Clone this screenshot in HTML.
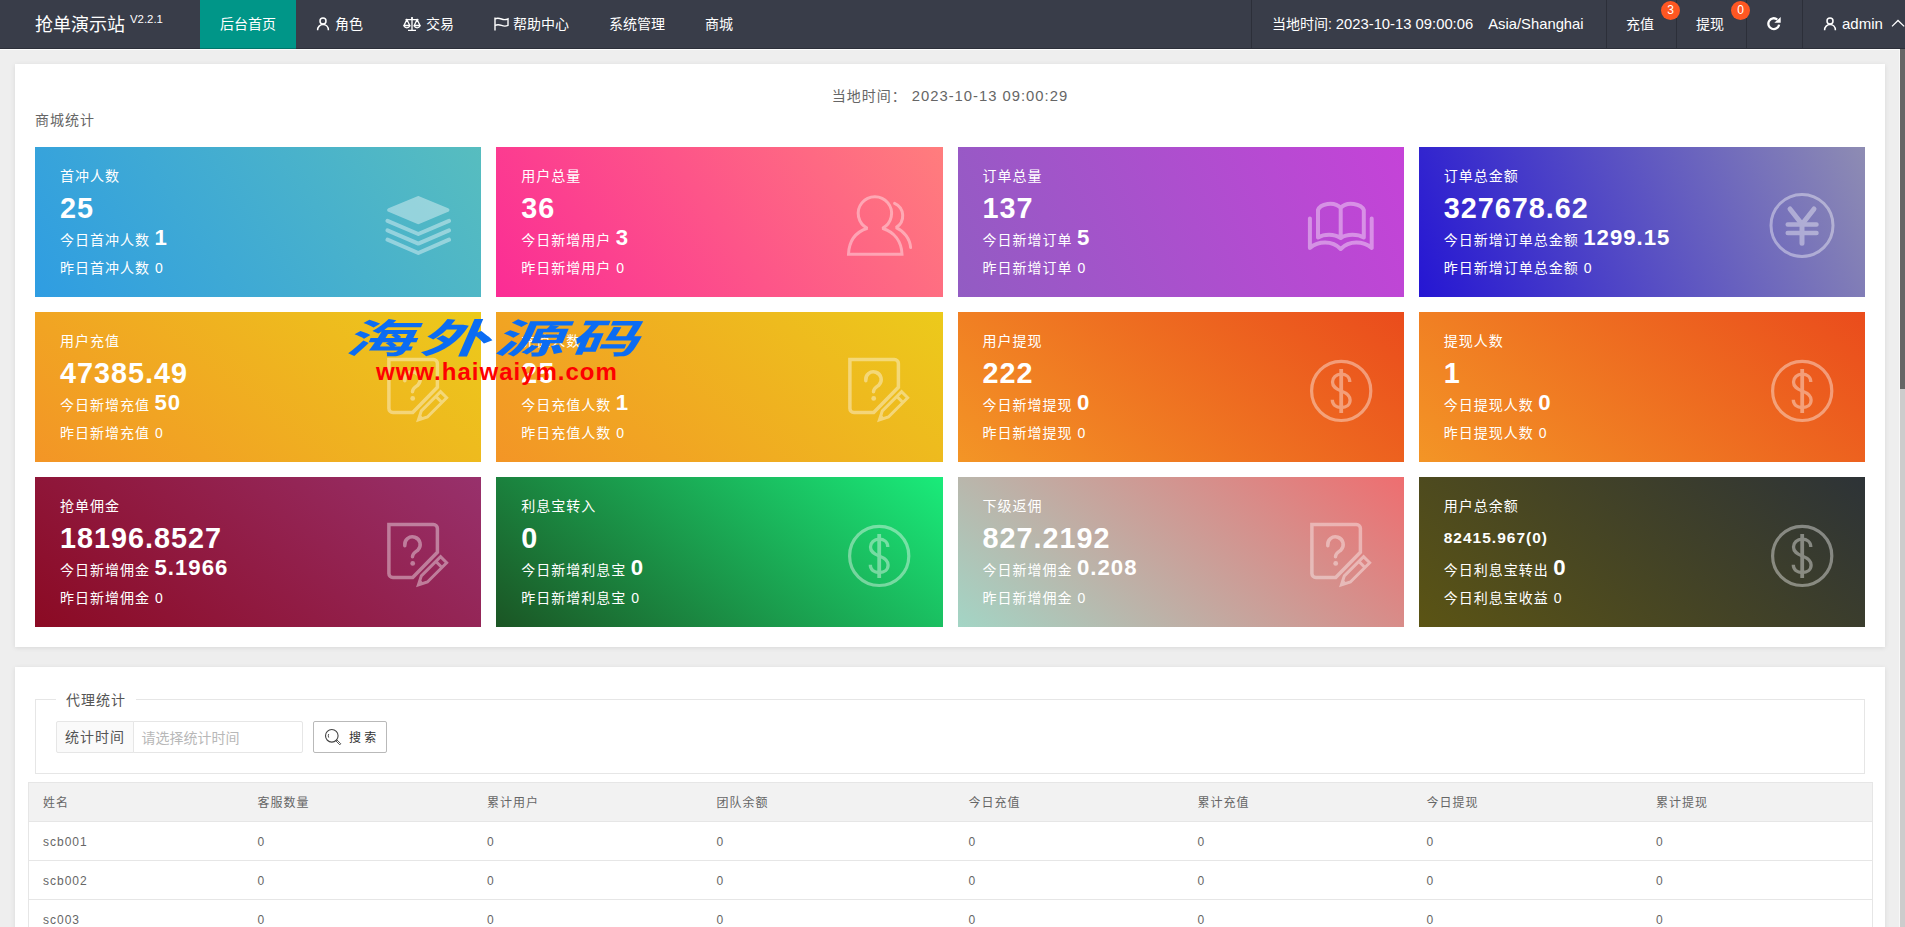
<!DOCTYPE html>
<html lang="zh-CN">
<head>
<meta charset="utf-8">
<title>抢单演示站</title>
<style>
*{box-sizing:border-box;margin:0;padding:0}
html,body{width:1905px;height:927px;overflow:hidden}
body{position:relative;background:#eee;font-family:"Liberation Sans","Noto Sans CJK SC",sans-serif;font-size:14px;color:#333;line-height:24px}
a{color:inherit;text-decoration:none}
/* ---------- header ---------- */
.hd{position:absolute;left:0;top:0;width:1905px;height:49px;background:#393d49;color:#fff;z-index:5}
.hd:after{content:'';position:absolute;left:0;top:48px;width:1905px;height:1px;background:rgba(0,0,0,.22)}
.wl{position:absolute;left:0;top:49px;width:1900px;height:1px;background:#fbfbfb}
.wr{position:absolute;left:1899px;top:49px;width:1px;height:878px;background:#f7f7f7}
.hd .logo{position:absolute;left:35px;top:0;height:48px;line-height:50px;font-size:18px;white-space:nowrap}
.hd .logo sup{font-size:11.4px;position:relative;top:-8px;left:5px;vertical-align:baseline;letter-spacing:0}
.nav{position:absolute;top:0;height:48px;line-height:49px;white-space:nowrap;font-size:14px}
.nav.l{left:200px}
.nav .it{position:absolute;top:0;height:49px;text-align:left}
.nav .it.on{background:#009688}
.nav .it svg{position:absolute}
.nav .it span{position:absolute;top:0}
.sep{position:absolute;top:0;width:1px;height:48px;background:rgba(0,0,0,.22)}
.bdg{position:absolute;top:1px;width:19px;height:19px;border-radius:10px;background:#ff5722;color:#fff;font-size:12px;line-height:19px;text-align:center}
/* ---------- scroll ---------- */
.sb{position:absolute;left:1900px;top:49px;width:5px;height:878px;background:#ccc}
.sb i{display:block;width:5px;height:340px;background:#666}
/* ---------- cards ---------- */
.card{position:absolute;left:15px;width:1870px;background:#fff;box-shadow:0 1px 5px 0 rgba(0,0,0,.09)}
.c1{top:64px;height:583px}
.c2{top:667px;height:300px}
.time{position:absolute;left:0;top:84px;width:1900px;text-align:center;color:#666;letter-spacing:1px;line-height:24px}
.ttl{position:absolute;left:35px;top:108px;color:#666;letter-spacing:1px;line-height:24px}
.st{position:absolute;width:446.25px;height:150px;color:#fff;padding:15px 25px;letter-spacing:1px;overflow:hidden}
.st div{white-space:nowrap}
.st .a{height:28px;line-height:28px}
.st .b{height:36px;line-height:36px;font-size:28.8px;font-weight:bold}
.st .b.sm{font-size:15.5px}
.st .c{height:28px;line-height:28px;position:relative;top:-2px}
.st .c b{font-size:22.2px;margin-left:4.5px}
.st .d{height:28px;line-height:28px}
.st .d span{margin-left:5px}
.st svg{position:absolute;left:346px;top:40px;width:76px;height:76px;overflow:visible}
.x1{left:35px}.x2{left:496.25px}.x3{left:957.5px}.x4{left:1418.75px}
.y1{top:147px}.y2{top:312px}.y3{top:477px}
.g1{background:linear-gradient(-125deg,#57bdbf,#2f9de2)}
.g2{background:linear-gradient(-125deg,#ff7d7d,#fb2c95)}
.g3{background:linear-gradient(-113deg,#c543d8,#925cc3)}
.g4{background:linear-gradient(-113deg,#8e8cb3,#2516d3)}
.g5{background:linear-gradient(-141deg,#ecca1b,#f39526)}
.g7{background:linear-gradient(-141deg,#ea4c1c,#f39526)}
.g9{background:linear-gradient(-141deg,#98316c,#8b0a23)}
.g10{background:linear-gradient(-141deg,#1aeb7a,#1b5524)}
.g11{background:linear-gradient(-141deg,#ee6e70,#a3d5c5)}
.g12{background:linear-gradient(-141deg,#2d3337,#5b5414)}
/* watermark */
.wm1{position:absolute;left:350px;top:311px;height:56px;line-height:56px;font-weight:700;font-size:40px;color:#0b6cf3;white-space:nowrap;letter-spacing:3px;z-index:4;transform-origin:0 50%;transform:scaleX(1.74) skewX(-14deg)}
.wm2{position:absolute;left:376px;top:357px;height:30px;line-height:30px;font-weight:bold;font-size:24px;letter-spacing:1px;color:#fe0000;white-space:nowrap;z-index:4}
/* ---------- fieldset ---------- */
.fs{position:absolute;left:35px;top:699px;width:1830px;height:75px;border:1px solid #e6e6e6}
.fs .lg{position:absolute;left:20px;top:-12px;height:24px;line-height:24px;padding:0 10px;background:#fff;color:#555;letter-spacing:1px;white-space:nowrap}
.lab{position:absolute;left:56px;top:721px;width:78px;height:32px;border:1px solid #e6e6e6;background:#fafafa;color:#555;line-height:30px;text-align:center;letter-spacing:1px;border-radius:2px 0 0 2px;white-space:nowrap}
.inp{position:absolute;left:133px;top:721px;width:170px;height:32px;border:1px solid #e6e6e6;background:#fff;color:#b8b8b8;line-height:32px;padding-left:7.5px;border-radius:0 2px 2px 0;white-space:nowrap}
.btn{position:absolute;left:313px;top:721px;width:74px;height:32px;border:1px solid #b9b9b9;background:#fff;color:#333;border-radius:2px;font-size:12px;line-height:33px;white-space:nowrap}
.btn span{position:absolute;left:35px;top:0;letter-spacing:0}
.btn svg{position:absolute;left:10px;top:6px}
/* ---------- table ---------- */
.tb{position:absolute;left:28px;top:782px;width:1845px;border-collapse:collapse;table-layout:fixed;font-size:12px;color:#666;letter-spacing:1px;background:#fff}
.tb th,.tb td{height:39px;padding:2px 0 0 14px;text-align:left;font-weight:normal;border-top:1px solid #e6e6e6;border-bottom:1px solid #e6e6e6;line-height:20px;white-space:nowrap}
.tb th{background:#f2f2f2}
.tb tr>*:first-child{border-left:1px solid #e6e6e6}
.tb tr>*:last-child{border-right:1px solid #e6e6e6}
</style>
</head>
<body>

<div class="hd">
  <div class="logo">抢单演示站<sup>V2.2.1</sup></div>
  <div class="nav l">
    <div class="it on" style="left:0;width:96px"><span style="left:20px">后台首页</span></div>
    <div class="it" style="left:96px;width:87px">
      <svg style="left:20px;top:17px" width="14" height="14" viewBox="0 0 14 14" fill="none" stroke="#fff" stroke-width="1.5"><circle cx="7" cy="4" r="3"/><path d="M1.6 13.2c0-3.4 2.4-5.6 5.4-5.6s5.4 2.2 5.4 5.6"/></svg>
      <span style="left:39px">角色</span></div>
    <div class="it" style="left:183px;width:90px">
      <svg style="left:20px;top:16px" width="18" height="16" viewBox="0 0 18 16" fill="none" stroke="#fff" stroke-width="1.3"><path d="M9 1.5v12.5M5 14.3h8M2.5 3.6h13M3.9 3.6L1 9.5h5.8L3.9 3.6zM14.1 3.6l-2.9 5.9H17l-2.9-5.9z"/><path d="M1 9.6c.5 1.6 1.6 2.2 2.9 2.2s2.4-.6 2.9-2.2M11.2 9.6c.5 1.6 1.6 2.2 2.9 2.2s2.4-.6 2.9-2.2" /><circle cx="9" cy="2" r="1" fill="#fff" stroke="none"/></svg>
      <span style="left:43px">交易</span></div>
    <div class="it" style="left:273px;width:115px">
      <svg style="left:21px;top:17px" width="16" height="14" viewBox="0 0 16 14" fill="none" stroke="#fff" stroke-width="1.4"><path d="M1 .5v13"/><path d="M1 1.8c2.5-1.2 4.5-.6 6.5.2s4 1 6.5-.2v6.6c-2.5 1.2-4.5.800-6.5 0s-4-1.2-6.5 0"/></svg>
      <span style="left:40px">帮助中心</span></div>
    <div class="it" style="left:388px;width:97px"><span style="left:21px">系统管理</span></div>
    <div class="it" style="left:485px;width:68px"><span style="left:20px">商城</span></div>
  </div>

  <i class="sep" style="left:1251px"></i>
  <i class="sep" style="left:1606px"></i>
  <i class="sep" style="left:1676px"></i>
  <i class="sep" style="left:1746px"></i>
  <i class="sep" style="left:1802px"></i>
  <div class="nav" style="left:1272px"><span id="t1">当地时间: <span style="font-size:14.8px">2023-10-13 09:00:06</span><span style="font-size:14.8px;margin-left:15px">Asia/Shanghai</span></span></div>
  <div class="nav" style="left:1626px">充值</div><b class="bdg" style="left:1661px;font-weight:normal">3</b>
  <div class="nav" style="left:1696px">提现</div><b class="bdg" style="left:1731px;font-weight:normal">0</b>
  <svg style="position:absolute;left:1766px;top:16px" width="16" height="16" viewBox="0 0 16 16" fill="none" stroke="#fff" stroke-width="2"><path d="M13.1 8.6A5.4 5.4 0 1 1 11.27 3.56" stroke-width="2.3"/><path d="M14.7 1.1V6.8H8.3z" fill="#fff" stroke="none"/></svg>
  <svg style="position:absolute;left:1823px;top:17px" width="14" height="14" viewBox="0 0 14 14" fill="none" stroke="#fff" stroke-width="1.5"><circle cx="7" cy="4" r="3"/><path d="M1.6 13.2c0-3.4 2.4-5.6 5.4-5.6s5.4 2.2 5.4 5.6"/></svg>
  <div class="nav" style="left:1842px;font-size:15px;line-height:47px">admin</div>
  <svg style="position:absolute;left:1891px;top:17px" width="14" height="10" viewBox="0 0 14 10" fill="none" stroke="#fff" stroke-width="1.3"><path d="M1 9.4L7 3.5L13.2 9.4"/></svg>
</div>

<div class="wl"></div><div class="wr"></div>
<div class="sb"><i></i></div>

<div class="card c1"></div>
<div class="time">当地时间：&nbsp;<span id="t2" style="font-size:14.8px">2023-10-13 09:00:29</span></div>
<div class="ttl">商城统计</div>

<!-- stat cards inserted here -->
<div class="st x1 y1 g1"><div class="a">首冲人数</div><div class="b ">25</div><div class="c">今日首冲人数<b>1</b></div><div class="d">昨日首冲人数<span>0</span></div><svg viewBox="0 0 76 76"><g opacity=".4" fill="#fff" stroke="#fff" stroke-width="4" stroke-linejoin="round" stroke-linecap="round"><path d="M8.2 23L37.3 11L66.4 23L37.3 35.2z"/><path fill="none" d="M6.5 33.8L37.3 47L68 33.8M6.5 43.3L37.3 56.6L68 43.3M6.5 52.7L37.3 66L68 52.7"/></g></svg></div>
<div class="st x2 y1 g2"><div class="a">用户总量</div><div class="b ">36</div><div class="c">今日新增用户<b>3</b></div><div class="d">昨日新增用户<span>0</span></div><svg viewBox="0 0 76 76" fill="none" stroke="#fff" stroke-opacity=".4" stroke-width="3" stroke-linecap="round" stroke-linejoin="miter" stroke-miterlimit="2.2"><path d="M25.4 41.3A16.7 16.7 0 1 1 40.4 41.3C52 45 59.5 54 60 67.3H6.5C7 54 14 45 25.4 41.3z"/><path d="M52.6 16.3A13.7 13.7 0 0 1 54 40.6C62 44 68 52 68.6 60.5"/></svg></div>
<div class="st x3 y1 g3"><div class="a">订单总量</div><div class="b ">137</div><div class="c">今日新增订单<b>5</b></div><div class="d">昨日新增订单<span>0</span></div><svg viewBox="0 0 76 76" fill="none" stroke="#fff" stroke-opacity=".4" stroke-width="4" stroke-linecap="round" stroke-linejoin="round"><path d="M5.9 31.5V61C14 54 28 53 36.7 62C45.4 53 59.5 54 67.7 61V31.5"/><path d="M14 50.5V23C16 17 30 13.5 36.7 21V51M36.7 21C43 13.5 57.5 17 59.8 23V50.5M14 50.5C20 47 30 46.5 36.7 51C43 46.5 54 47 59.8 50.5" /></svg></div>
<div class="st x4 y1 g4"><div class="a">订单总金额</div><div class="b ">327678.62</div><div class="c">今日新增订单总金额<b>1299.15</b></div><div class="d">昨日新增订单总金额<span>0</span></div><svg viewBox="0 0 76 76"><g opacity=".4" fill="none" stroke="#fff" stroke-linecap="round"><circle cx="37" cy="38.4" r="31" stroke-width="3"/><path d="M25 22L37 37.3L49 22M37 37.3V56.3" stroke-width="5" stroke-linejoin="round"/><path d="M22.7 37.5h28.8M22.7 45.9h28.8" stroke-width="4.5"/></g></svg></div>
<div class="st x1 y2 g5"><div class="a">用户充值</div><div class="b ">47385.49</div><div class="c">今日新增充值<b>50</b></div><div class="d">昨日新增充值<span>0</span></div><svg viewBox="0 0 76 76"><g opacity=".4" fill="none" stroke="#fff" stroke-width="3.5" stroke-linejoin="miter"><path d="M7.9 7.6H52.4a4 4 0 0 1 4 4V35.2L31.7 60.5H11.9a4 4 0 0 1-4-4z"/><path d="M23.8 28.8A7.75 7.75 0 1 1 36.8 33.2C33.5 35.5 31.5 36.5 31.5 39.8" stroke-linecap="round"/><circle cx="31.7" cy="46.4" r="2.4" fill="#fff" stroke="none"/><g transform="translate(35.6 69.7) rotate(-45)" stroke-width="3"><path d="M2.5 0L11-4.3H38.2V4.3H11z"/><path d="M31.5-4.3V4.3"/><path d="M1 0L7.5-2.9V2.9z" fill="#fff" stroke="none"/></g></g></svg></div>
<div class="st x2 y2 g5"><div class="a">充值人数</div><div class="b ">25</div><div class="c">今日充值人数<b>1</b></div><div class="d">昨日充值人数<span>0</span></div><svg viewBox="0 0 76 76"><g opacity=".4" fill="none" stroke="#fff" stroke-width="3.5" stroke-linejoin="miter"><path d="M7.9 7.6H52.4a4 4 0 0 1 4 4V35.2L31.7 60.5H11.9a4 4 0 0 1-4-4z"/><path d="M23.8 28.8A7.75 7.75 0 1 1 36.8 33.2C33.5 35.5 31.5 36.5 31.5 39.8" stroke-linecap="round"/><circle cx="31.7" cy="46.4" r="2.4" fill="#fff" stroke="none"/><g transform="translate(35.6 69.7) rotate(-45)" stroke-width="3"><path d="M2.5 0L11-4.3H38.2V4.3H11z"/><path d="M31.5-4.3V4.3"/><path d="M1 0L7.5-2.9V2.9z" fill="#fff" stroke="none"/></g></g></svg></div>
<div class="st x3 y2 g7"><div class="a">用户提现</div><div class="b ">222</div><div class="c">今日新增提现<b>0</b></div><div class="d">昨日新增提现<span>0</span></div><svg viewBox="0 0 76 76"><g opacity=".4" fill="none" stroke="#fff"><circle cx="37.2" cy="38.9" r="29.6" stroke-width="3.2"/><path d="M37.2 17V61" stroke-width="3.8"/><path d="M45.8 29.9C45.8 25 42 22.2 37.2 22.2C32 22.2 28.5 25.5 28.5 30C28.5 35 32 37 37.2 39C43 41.2 46.1 43.5 46.1 48C46.1 52.5 42.5 55.5 37.2 55.5C32 55.5 28.3 52.5 28.3 47.8" stroke-width="3.3"/></g></svg></div>
<div class="st x4 y2 g7"><div class="a">提现人数</div><div class="b ">1</div><div class="c">今日提现人数<b>0</b></div><div class="d">昨日提现人数<span>0</span></div><svg viewBox="0 0 76 76"><g opacity=".4" fill="none" stroke="#fff"><circle cx="37.2" cy="38.9" r="29.6" stroke-width="3.2"/><path d="M37.2 17V61" stroke-width="3.8"/><path d="M45.8 29.9C45.8 25 42 22.2 37.2 22.2C32 22.2 28.5 25.5 28.5 30C28.5 35 32 37 37.2 39C43 41.2 46.1 43.5 46.1 48C46.1 52.5 42.5 55.5 37.2 55.5C32 55.5 28.3 52.5 28.3 47.8" stroke-width="3.3"/></g></svg></div>
<div class="st x1 y3 g9"><div class="a">抢单佣金</div><div class="b ">18196.8527</div><div class="c">今日新增佣金<b>5.1966</b></div><div class="d">昨日新增佣金<span>0</span></div><svg viewBox="0 0 76 76"><g opacity=".4" fill="none" stroke="#fff" stroke-width="3.5" stroke-linejoin="miter"><path d="M7.9 7.6H52.4a4 4 0 0 1 4 4V35.2L31.7 60.5H11.9a4 4 0 0 1-4-4z"/><path d="M23.8 28.8A7.75 7.75 0 1 1 36.8 33.2C33.5 35.5 31.5 36.5 31.5 39.8" stroke-linecap="round"/><circle cx="31.7" cy="46.4" r="2.4" fill="#fff" stroke="none"/><g transform="translate(35.6 69.7) rotate(-45)" stroke-width="3"><path d="M2.5 0L11-4.3H38.2V4.3H11z"/><path d="M31.5-4.3V4.3"/><path d="M1 0L7.5-2.9V2.9z" fill="#fff" stroke="none"/></g></g></svg></div>
<div class="st x2 y3 g10"><div class="a">利息宝转入</div><div class="b ">0</div><div class="c">今日新增利息宝<b>0</b></div><div class="d">昨日新增利息宝<span>0</span></div><svg viewBox="0 0 76 76"><g opacity=".4" fill="none" stroke="#fff"><circle cx="37.2" cy="38.9" r="29.6" stroke-width="3.2"/><path d="M37.2 17V61" stroke-width="3.8"/><path d="M45.8 29.9C45.8 25 42 22.2 37.2 22.2C32 22.2 28.5 25.5 28.5 30C28.5 35 32 37 37.2 39C43 41.2 46.1 43.5 46.1 48C46.1 52.5 42.5 55.5 37.2 55.5C32 55.5 28.3 52.5 28.3 47.8" stroke-width="3.3"/></g></svg></div>
<div class="st x3 y3 g11"><div class="a">下级返佣</div><div class="b ">827.2192</div><div class="c">今日新增佣金<b>0.208</b></div><div class="d">昨日新增佣金<span>0</span></div><svg viewBox="0 0 76 76"><g opacity=".4" fill="none" stroke="#fff" stroke-width="3.5" stroke-linejoin="miter"><path d="M7.9 7.6H52.4a4 4 0 0 1 4 4V35.2L31.7 60.5H11.9a4 4 0 0 1-4-4z"/><path d="M23.8 28.8A7.75 7.75 0 1 1 36.8 33.2C33.5 35.5 31.5 36.5 31.5 39.8" stroke-linecap="round"/><circle cx="31.7" cy="46.4" r="2.4" fill="#fff" stroke="none"/><g transform="translate(35.6 69.7) rotate(-45)" stroke-width="3"><path d="M2.5 0L11-4.3H38.2V4.3H11z"/><path d="M31.5-4.3V4.3"/><path d="M1 0L7.5-2.9V2.9z" fill="#fff" stroke="none"/></g></g></svg></div>
<div class="st x4 y3 g12"><div class="a">用户总余额</div><div class="b sm">82415.967(0)</div><div class="c">今日利息宝转出<b>0</b></div><div class="d">今日利息宝收益<span>0</span></div><svg viewBox="0 0 76 76"><g opacity=".4" fill="none" stroke="#fff"><circle cx="37.2" cy="38.9" r="29.6" stroke-width="3.2"/><path d="M37.2 17V61" stroke-width="3.8"/><path d="M45.8 29.9C45.8 25 42 22.2 37.2 22.2C32 22.2 28.5 25.5 28.5 30C28.5 35 32 37 37.2 39C43 41.2 46.1 43.5 46.1 48C46.1 52.5 42.5 55.5 37.2 55.5C32 55.5 28.3 52.5 28.3 47.8" stroke-width="3.3"/></g></svg></div>

<div class="wm1">海外源码</div>
<div class="wm2">www.haiwaiym.com</div>

<div class="card c2"></div>
<div class="fs"><div class="lg">代理统计</div></div>
<div class="lab">统计时间</div>
<div class="inp">请选择统计时间</div>
<div class="btn"><svg width="18" height="18" viewBox="0 0 18 18" fill="none" stroke="#444" stroke-width="1.1"><circle cx="7.8" cy="7.8" r="6.3"/><path d="M12.6 11.6l4.2 4.2-1 1-4.2-4.2z" stroke-width=".9"/><path d="M4.7 9.6a4 4 0 0 1 0-3.6" stroke-width=".9"/></svg><span>搜 索</span></div>

<table class="tb">
<colgroup><col style="width:215px"><col style="width:229.5px"><col style="width:229.5px"><col style="width:252px"><col style="width:229px"><col style="width:229px"><col style="width:229.5px"><col></colgroup>
<tr><th>姓名</th><th>客服数量</th><th>累计用户</th><th>团队余额</th><th>今日充值</th><th>累计充值</th><th>今日提现</th><th>累计提现</th></tr>
<tr><td>scb001</td><td>0</td><td>0</td><td>0</td><td>0</td><td>0</td><td>0</td><td>0</td></tr>
<tr><td>scb002</td><td>0</td><td>0</td><td>0</td><td>0</td><td>0</td><td>0</td><td>0</td></tr>
<tr><td>sc003</td><td>0</td><td>0</td><td>0</td><td>0</td><td>0</td><td>0</td><td>0</td></tr>
</table>

</body>
</html>
